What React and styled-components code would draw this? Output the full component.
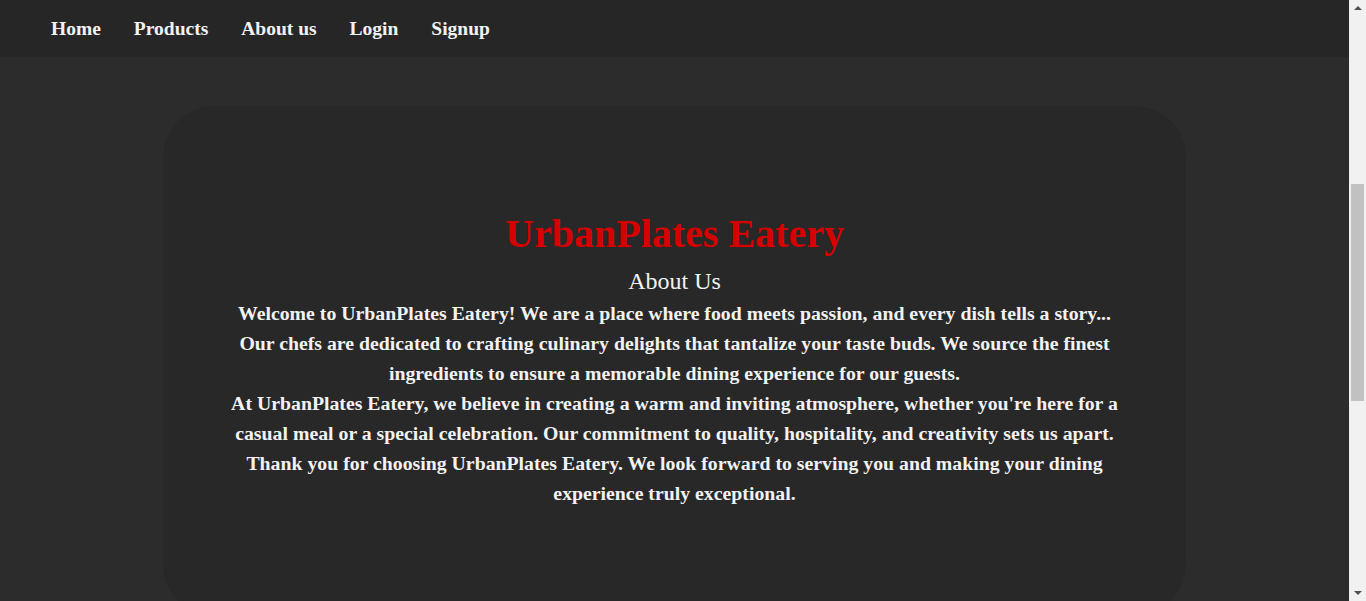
import React from "react";
import styled, { createGlobalStyle } from "styled-components";

const GlobalStyle = createGlobalStyle`
  html, body {
    margin: 0;
    padding: 0;
    background: #2c2c2c;
    font-family: "Liberation Serif", "DejaVu Serif", serif;
    overflow: hidden;
  }
`;

const links = ["Home", "Products", "About us", "Login", "Signup"];

const paragraphs = [
  ["Welcome to UrbanPlates Eatery! We are a place where food meets passion, and every dish tells a story..."],
  [
    "Our chefs are dedicated to crafting culinary delights that tantalize your taste buds. We source the finest",
    "ingredients to ensure a memorable dining experience for our guests.",
  ],
  [
    "At UrbanPlates Eatery, we believe in creating a warm and inviting atmosphere, whether you're here for a",
    "casual meal or a special celebration. Our commitment to quality, hospitality, and creativity sets us apart.",
  ],
  [
    "Thank you for choosing UrbanPlates Eatery. We look forward to serving you and making your dining",
    "experience truly exceptional.",
  ],
];

function App() {
  return (
    <>
      <GlobalStyle />
      <Page>
        <NavBar>
          {links.map((link) => (
            <NavLink key={link} href="#">
              {link}
            </NavLink>
          ))}
        </NavBar>
        <Main>
          <Card>
            <Title>UrbanPlates Eatery</Title>
            <SubTitle>About Us</SubTitle>
            <Text>
              {paragraphs.map((lines, i) => (
                <Paragraph key={i}>
                  {lines.map((line) => (
                    <Line key={line}>{line}</Line>
                  ))}
                </Paragraph>
              ))}
            </Text>
          </Card>
        </Main>
      </Page>
      {/* browser scrollbar of the original page */}
      <ScrollTrack>
        <Arrow $up />
        <Thumb />
        <Arrow />
      </ScrollTrack>
    </>
  );
}

export default App;

const Page = styled.div`
  margin-right: 17px;
  height: 601px;
  overflow: hidden;
`;

const NavBar = styled.nav`
  display: flex;
  align-items: center;
  gap: 33px;
  height: 57px;
  padding: 0 51px;
  background: #262626;
`;

const NavLink = styled.a`
  color: #f2f2f2;
  text-decoration: none;
  font-size: 19.5px;
  font-weight: bold;
`;

const Main = styled.main`
  display: flex;
  justify-content: center;
  padding-top: 49px;
`;

const Card = styled.section`
  width: 1023px;
  min-height: 510px;
  box-sizing: border-box;
  padding: 104px 40px 80px;
  background: #282828;
  border-radius: 52px;
  display: flex;
  flex-direction: column;
  align-items: center;
`;

const Title = styled.h1`
  margin: 0 0 8px;
  color: #d50000;
  font-size: 40px;
  line-height: 48px;
  font-weight: bold;
`;

const SubTitle = styled.h2`
  margin: 0 0 2px;
  color: #f2f2f2;
  font-size: 24px;
  line-height: 30px;
  font-weight: normal;
`;

const Text = styled.div`
  color: #f2f2f2;
  font-size: 19.8px;
  line-height: 30px;
  font-weight: bold;
  text-align: center;
`;

const Paragraph = styled.p`
  margin: 0;
`;

const Line = styled.span`
  display: block;
  white-space: nowrap;
`;

const ScrollTrack = styled.div`
  position: fixed;
  top: 0;
  right: 0;
  width: 17px;
  height: 601px;
  background: #f1f1f1;
  display: flex;
  flex-direction: column;
  align-items: center;
  justify-content: space-between;
`;

const Arrow = styled.div`
  width: 0;
  height: 0;
  margin: 6px 0;
  border-left: 4px solid transparent;
  border-right: 4px solid transparent;
  ${(p) =>
    p.$up
      ? "border-bottom: 4px solid #505050;"
      : "border-top: 4px solid #505050;"}
`;

const Thumb = styled.div`
  width: 13px;
  height: 217px;
  margin-top: 168px;
  margin-bottom: auto;
  background: #c1c1c1;
`;
